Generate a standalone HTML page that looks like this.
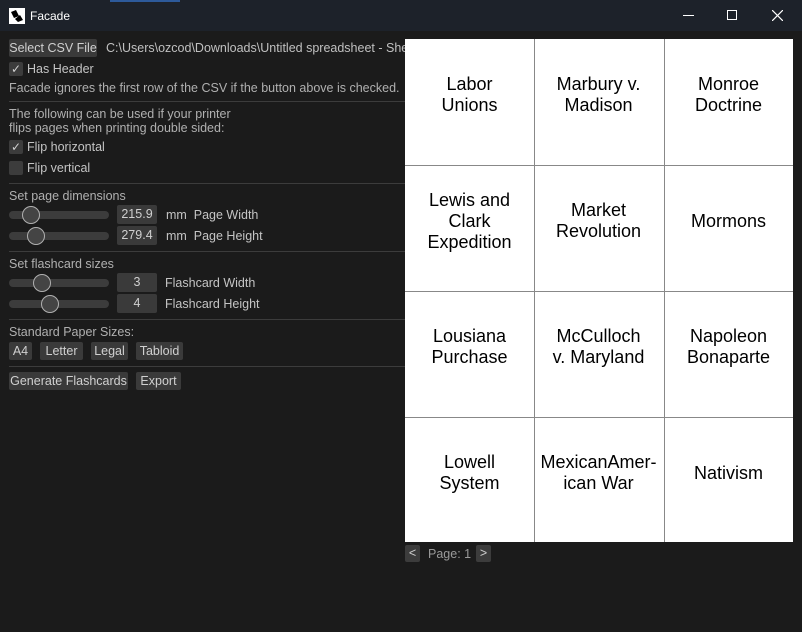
<!DOCTYPE html>
<html><head><meta charset="utf-8"><style>
*{margin:0;padding:0;box-sizing:border-box}
body{width:802px;height:632px;background:#1b1b1b;font-family:"Liberation Sans",sans-serif;font-size:12.5px;color:#c4c4c4;position:relative;overflow:hidden}
.t{position:absolute;white-space:nowrap;line-height:14px}
.btn{position:absolute;background:#3a3a3a;height:18px;line-height:18px;color:#d0d0d0;border-radius:2px;white-space:nowrap;text-align:center;overflow:hidden}
.sep{position:absolute;left:9px;width:396px;height:1px;background:#3c3c3c}
.cb{position:absolute;left:9px;width:14px;height:14px;background:#3c3c3c;border-radius:2px;color:#d0d0d0;font-size:12px;line-height:14px;text-align:center}
.trk{position:absolute;left:9px;width:100px;height:8px;background:#3c3c3c;border-radius:4px}
.knob{position:absolute;width:18px;height:18px;border-radius:50%;border:1.5px solid #b0b0b0;background:#444}
.val{position:absolute;left:117px;width:40px;height:19px;background:#3a3a3a;text-align:center;line-height:19px;color:#d0d0d0;border-radius:2px}
.grid{position:absolute;left:405px;top:39px;width:388px;height:503px;background:#fff}
.c{position:absolute;display:flex;align-items:center;justify-content:center;text-align:center;font-family:"Liberation Sans",sans-serif;font-size:18px;line-height:21px;color:#000;width:129px;height:126px;padding-bottom:14px}
.vl{position:absolute;top:0;width:1px;height:503px;background:#888}
.hl{position:absolute;left:0;height:1px;width:388px;background:#888}
</style></head><body>
<div style="position:absolute;left:0;top:0;width:802px;height:31px;background:#1d222a"></div>
<div style="position:absolute;left:110px;top:0;width:70px;height:2px;background:#2d5a9a"></div>
<svg style="position:absolute;left:9px;top:8px" width="16" height="16"><rect x="0.5" y="0.5" width="15" height="15" fill="#fff" stroke="#fff"/><path d="M2 4 L7 2 L10 8 L5 10Z M6 11 L11 7 L14 12 L9 14Z" fill="#000"/></svg>
<div class="t" style="left:30px;top:9px;color:#fff;font-size:12px">Facade</div>
<div style="position:absolute;left:683px;top:15px;width:11px;height:1px;background:#fff"></div>
<div style="position:absolute;left:727px;top:10px;width:10px;height:10px;border:1px solid #fff"></div>
<svg style="position:absolute;left:772px;top:10px" width="11" height="11"><path d="M0 0L11 11M11 0L0 11" stroke="#fff" stroke-width="1.2"/></svg>

<div class="btn" style="left:9px;top:39px;width:88px">Select CSV File</div>
<div class="t" style="left:106px;top:41px;color:#c0c0c0">C:\Users\ozcod\Downloads\Untitled spreadsheet - Shee</div>
<div class="cb" style="top:62px">✓</div><div class="t" style="left:27px;top:62px">Has Header</div>
<div class="t" style="left:9px;top:81px;color:#b0b0b0">Facade ignores the first row of the CSV if the button above is checked.</div>
<div class="sep" style="top:101px"></div>
<div class="t" style="left:9px;top:107px;color:#b0b0b0">The following can be used if your printer</div>
<div class="t" style="left:9px;top:121px;color:#b0b0b0">flips pages when printing double sided:</div>
<div class="cb" style="top:140px">✓</div><div class="t" style="left:27px;top:140px">Flip horizontal</div>
<div class="cb" style="top:161px"></div><div class="t" style="left:27px;top:161px">Flip vertical</div>
<div class="sep" style="top:183px"></div>
<div class="t" style="left:9px;top:189px;color:#b0b0b0">Set page dimensions</div>
<div class="trk" style="top:211px"></div><div class="knob" style="left:22px;top:206px"></div>
<div class="val" style="top:205px">215.9</div><div class="t" style="left:166px;top:208px">mm&nbsp; Page Width</div>
<div class="trk" style="top:232px"></div><div class="knob" style="left:27px;top:227px"></div>
<div class="val" style="top:226px">279.4</div><div class="t" style="left:166px;top:229px">mm&nbsp; Page Height</div>
<div class="sep" style="top:251px"></div>
<div class="t" style="left:9px;top:257px;color:#b0b0b0">Set flashcard sizes</div>
<div class="trk" style="top:279px"></div><div class="knob" style="left:33px;top:274px"></div>
<div class="val" style="top:273px">3</div><div class="t" style="left:165px;top:276px">Flashcard Width</div>
<div class="trk" style="top:300px"></div><div class="knob" style="left:41px;top:295px"></div>
<div class="val" style="top:294px">4</div><div class="t" style="left:165px;top:297px">Flashcard Height</div>
<div class="sep" style="top:319px"></div>
<div class="t" style="left:9px;top:325px;color:#b0b0b0">Standard Paper Sizes:</div>
<div class="btn" style="left:9px;top:342px;width:23px">A4</div>
<div class="btn" style="left:40px;top:342px;width:43px">Letter</div>
<div class="btn" style="left:91px;top:342px;width:37px">Legal</div>
<div class="btn" style="left:136px;top:342px;width:47px">Tabloid</div>
<div class="sep" style="top:366px"></div>
<div class="btn" style="left:9px;top:372px;width:119px">Generate Flashcards</div>
<div class="btn" style="left:136px;top:372px;width:45px">Export</div>

<div class="grid">
<div class="c" style="left:0;top:0">Labor<br>Unions</div>
<div class="c" style="left:129px;top:0">Marbury v.<br>Madison</div>
<div class="c" style="left:259px;top:0">Monroe<br>Doctrine</div>
<div class="c" style="left:0;top:126px">Lewis and<br>Clark<br>Expedition</div>
<div class="c" style="left:129px;top:126px">Market<br>Revolution</div>
<div class="c" style="left:259px;top:126px">Mormons</div>
<div class="c" style="left:0;top:252px">Lousiana<br>Purchase</div>
<div class="c" style="left:129px;top:252px">McCulloch<br>v. Maryland</div>
<div class="c" style="left:259px;top:252px">Napoleon<br>Bonaparte</div>
<div class="c" style="left:0;top:378px">Lowell<br>System</div>
<div class="c" style="left:129px;top:378px">MexicanAmer-<br>ican War</div>
<div class="c" style="left:259px;top:378px">Nativism</div>
<div class="vl" style="left:129px"></div><div class="vl" style="left:259px"></div>
<div class="hl" style="top:126px"></div><div class="hl" style="top:252px"></div><div class="hl" style="top:378px"></div>
</div>
<div class="btn" style="left:405px;top:545px;width:15px;height:17px;line-height:17px;background:#3c3c3c">&lt;</div>
<div class="t" style="left:428px;top:547px;color:#9a9a9a">Page: 1</div>
<div class="btn" style="left:476px;top:545px;width:15px;height:17px;line-height:17px;background:#3c3c3c">&gt;</div>
</body></html>
